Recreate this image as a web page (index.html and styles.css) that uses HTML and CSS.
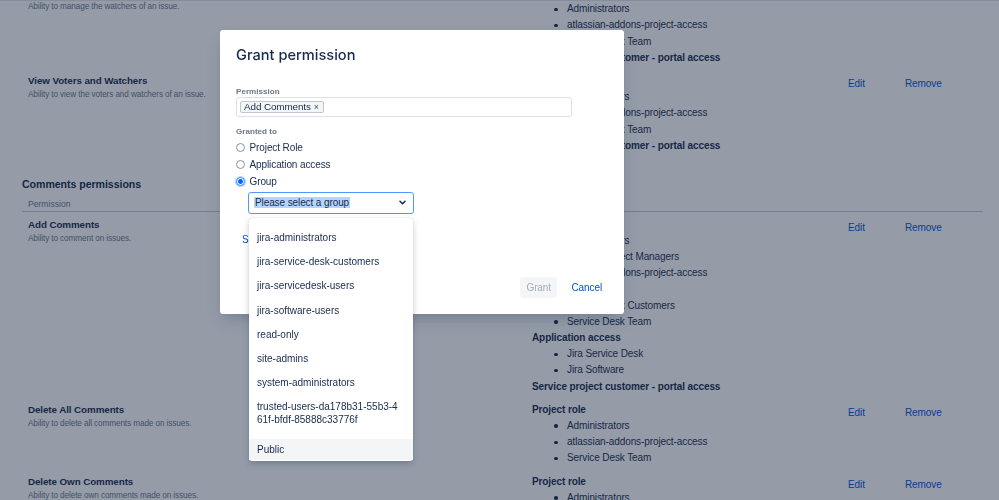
FILE: index.html
```html
<!DOCTYPE html>
<html lang="en">
<head>
<meta charset="utf-8">
<title>Grant permission</title>
<link rel="stylesheet" href="styles.css">
</head>
<body>
<div class="page">
  <section class="perm-section">
    <div class="perm-table">
      <div class="perm-row">
        <div class="perm-cell">
          <div class="perm-title">Manage Watchers</div>
          <div class="perm-desc">Ability to manage the watchers of an issue.</div>
        </div>
        <div class="grants">
          <div class="grant-type">Project role</div>
          <ul class="grant-list"><li>Administrators</li><li>atlassian-addons-project-access</li><li>Service Desk Team</li></ul>
          <div class="grant-type">Service project customer - portal access</div>
        </div>
        <a class="action" href="#">Edit</a>
        <a class="action" href="#">Remove</a>
      </div>
      <div class="perm-row">
        <div class="perm-cell">
          <div class="perm-title">View Voters and Watchers</div>
          <div class="perm-desc">Ability to view the voters and watchers of an issue.</div>
        </div>
        <div class="grants">
          <div class="grant-type">Project role</div>
          <ul class="grant-list"><li>Administrators</li><li>atlassian-addons-project-access</li><li>Service Desk Team</li></ul>
          <div class="grant-type">Service project customer - portal access</div>
        </div>
        <a class="action" href="#">Edit</a>
        <a class="action" href="#">Remove</a>
      </div>
    </div>
  </section>

  <section class="perm-section">
    <h3 class="section-heading">Comments permissions</h3>
    <div class="table-head">Permission</div>
    <div class="perm-table">
      <div class="perm-row">
        <div class="perm-cell">
          <div class="perm-title">Add Comments</div>
          <div class="perm-desc">Ability to comment on issues.</div>
        </div>
        <div class="grants">
          <div class="grant-type">Project role</div>
          <ul class="grant-list"><li>Administrators</li><li>Service Project Managers</li><li>atlassian-addons-project-access</li><li>Developers</li><li>Service Desk Customers</li><li>Service Desk Team</li></ul>
          <div class="grant-type">Application access</div>
          <ul class="grant-list"><li>Jira Service Desk</li><li>Jira Software</li></ul>
          <div class="grant-type">Service project customer - portal access</div>
        </div>
        <a class="action" href="#">Edit</a>
        <a class="action" href="#">Remove</a>
      </div>
      <div class="perm-row">
        <div class="perm-cell">
          <div class="perm-title">Delete All Comments</div>
          <div class="perm-desc">Ability to delete all comments made on issues.</div>
        </div>
        <div class="grants">
          <div class="grant-type">Project role</div>
          <ul class="grant-list"><li>Administrators</li><li>atlassian-addons-project-access</li><li>Service Desk Team</li></ul>
        </div>
        <a class="action" href="#">Edit</a>
        <a class="action" href="#">Remove</a>
      </div>
      <div class="perm-row">
        <div class="perm-cell">
          <div class="perm-title">Delete Own Comments</div>
          <div class="perm-desc">Ability to delete own comments made on issues.</div>
        </div>
        <div class="grants">
          <div class="grant-type">Project role</div>
          <ul class="grant-list"><li>Administrators</li><li>atlassian-addons-project-access</li><li>Service Desk Team</li></ul>
        </div>
        <a class="action" href="#">Edit</a>
        <a class="action" href="#">Remove</a>
      </div>
    </div>
  </section>
</div>

<div class="blanket"></div>

<div class="dialog" role="dialog">
  <h2 class="dialog-title">Grant permission</h2>
  <div class="field-label">Permission</div>
  <div class="multi-select"><span class="tag">Add Comments<span class="tag-x">×</span></span></div>
  <div class="field-label granted">Granted to</div>
  <div class="radio-group">
    <div class="radio"><span class="radio-circle"></span>Project Role</div>
    <div class="radio"><span class="radio-circle"></span>Application access</div>
    <div class="radio"><span class="radio-circle checked"></span>Group</div>
  </div>
  <div class="select-wrap">
    <div class="select">
      <span class="select-text">Please select a group</span>
      <svg class="chevron" width="7" height="5" viewBox="0 0 7 5"><path d="M1 1.2 L3.5 3.7 L6 1.2" fill="none" stroke="#172b4d" stroke-width="1.5" stroke-linecap="round" stroke-linejoin="round"/></svg>
    </div>
    <div class="dropdown">
      <div class="dd-group">
        <div class="dd-item">jira-administrators</div>
        <div class="dd-item">jira-service-desk-customers</div>
        <div class="dd-item">jira-servicedesk-users</div>
        <div class="dd-item">jira-software-users</div>
        <div class="dd-item">read-only</div>
        <div class="dd-item">site-admins</div>
        <div class="dd-item">system-administrators</div>
        <div class="dd-item">trusted-users-da178b31-55b3-4<br>61f-bfdf-85888c33776f</div>
      </div>
      <div class="dd-item dd-active">Public</div>
    </div>
  </div>
  <a class="show-link" href="#">Show advanced</a>
  <div class="dialog-footer">
    <button class="btn btn-disabled" type="button">Grant</button>
    <button class="btn btn-link" type="button">Cancel</button>
  </div>
</div>
</body>
</html>
```

FILE: styles.css
```css
* { box-sizing: border-box; }

body {
  margin: 0;
  width: 999px;
  height: 500px;
  overflow: hidden;
  font-family: "Liberation Sans", Arial, sans-serif;
  color: #172b4d;
  background: #ffffff;
}

.page {
  margin-top: -20px;
  padding-left: 22px;
  width: 983px;
}

.perm-table { width: 961px; }

.perm-row {
  display: grid;
  grid-template-columns: 504px 316px 57px 1fr;
  padding: 5px 0 2px 6px;
  align-items: start;
}

.perm-title {
  font-weight: bold;
  font-size: 9.8px;
  letter-spacing: -0.08px;
  line-height: 16px;
}

.perm-desc {
  font-size: 8.2px;
  letter-spacing: -0.1px;
  line-height: 12px;
  color: #6b778c;
}

.grants {
  font-size: 10px;
  letter-spacing: -0.1px;
  line-height: 16.2px;
}

.grant-type { font-weight: bold; }

.grant-list {
  list-style: none;
  margin: 0;
  padding: 0 0 0 22px;
}

.grant-list li {
  display: flex;
  align-items: center;
}

.grant-list li::before {
  content: "";
  flex: none;
  width: 3.5px;
  height: 3.5px;
  border-radius: 50%;
  background: currentColor;
  margin-right: 9.5px;
}

.action {
  font-size: 10px;
  letter-spacing: -0.1px;
  line-height: 16px;
  padding-top: 3px;
  color: #0052cc;
  text-decoration: none;
}

.section-heading {
  margin: 19.5px 0 0;
  font-size: 10.6px;
  letter-spacing: -0.05px;
  line-height: 16px;
  font-weight: bold;
}

.table-head {
  width: 961px;
  margin-top: 6px;
  padding: 0 0 1px 6px;
  font-size: 8.6px;
  line-height: 12px;
  color: #6b778c;
  border-bottom: 1px solid #c1c7d0;
}

/* overlay */
.blanket {
  position: fixed;
  inset: 0;
  background: rgba(20, 35, 62, 0.45);
  border-top: 1px solid rgba(9, 30, 66, 0.12);
  z-index: 1;
}

.dialog {
  position: fixed;
  left: 220px;
  top: 29.5px;
  width: 404px;
  height: 284.5px;
  padding: 16.5px 16px 16px;
  background: #ffffff;
  border-radius: 3px;
  display: flex;
  flex-direction: column;
  align-items: flex-start;
  z-index: 2;
  box-shadow: 0 8px 16px -4px rgba(9, 30, 66, 0.25);
}

.dialog-title {
  margin: 0;
  font-family: Inter, "Liberation Sans", Arial, sans-serif;
  font-size: 14.6px;
  line-height: 19px;
  font-weight: 500;
  color: #172b4d;
}

.field-label {
  margin-top: 21px;
  font-size: 8.1px;
  line-height: 11px;
  font-weight: bold;
  color: #6b778c;
}

.field-label.granted { margin-top: 8.5px; }

.multi-select {
  width: 336px;
  height: 20px;
  border: 1px solid #dfe1e6;
  border-radius: 3px;
  display: flex;
  align-items: center;
  padding-left: 3px;
}

.tag {
  display: inline-flex;
  align-items: center;
  height: 12.5px;
  padding: 0 3.5px 0 3px;
  font-size: 9.9px;
  letter-spacing: -0.1px;
  line-height: 10px;
  color: #172b4d;
  background: #f4f5f7;
  border: 1px solid #c1c7d0;
  border-radius: 2px;
}

.tag-x {
  margin-left: 3px;
  font-size: 9px;
  color: #42526e;
}

.radio-group {
  margin-top: 2px;
  display: flex;
  flex-direction: column;
}

.radio {
  display: flex;
  align-items: center;
  font-size: 10px;
  letter-spacing: -0.1px;
  line-height: 17px;
  color: #172b4d;
}

.radio-circle {
  flex: none;
  width: 9px;
  height: 9px;
  margin-right: 4.5px;
  border: 1px solid #8993a4;
  border-radius: 50%;
  background: #ffffff;
}

.radio-circle.checked {
  border-color: #2684ff;
  background: radial-gradient(circle, #0065ff 0 2.1px, #ffffff 2.6px);
  box-shadow: 0 0 0 1px #b3d4ff;
}

.select-wrap {
  position: relative;
  margin: 2.4px 0 0 12px;
  width: 166px;
}

.select {
  height: 22px;
  display: flex;
  align-items: center;
  justify-content: space-between;
  padding: 0 7px 0 5px;
  border: 1px solid #4c9aff;
  border-radius: 3px;
  background: #ffffff;
}

.select-text {
  font-size: 10px;
  letter-spacing: -0.1px;
  line-height: 11px;
  background: #b4d5fe;
  color: #172b4d;
  padding: 0 1px;
}

.chevron { display: block; }

.dropdown {
  position: absolute;
  top: 26.5px;
  left: 1px;
  width: 164px;
  background: #ffffff;
  border-radius: 3px;
  box-shadow: 0 3px 6px rgba(9, 30, 66, 0.22), 0 0 1px rgba(9, 30, 66, 0.3);
  padding-bottom: 1px;
  z-index: 3;
}

.dd-group { padding-top: 7.5px; padding-bottom: 7.5px; }

.dd-item {
  padding: 6px 8px;
  font-size: 10px;
  line-height: 12.2px;
  color: #172b4d;
  white-space: nowrap;
}

.dd-active {
  padding-top: 4.4px;
  padding-bottom: 4.4px;
  background: #f4f5f7;
}

.show-link {
  margin: 20px 0 0 6px;
  font-size: 10px;
  line-height: 12px;
  color: #0052cc;
  text-decoration: none;
}

.dialog-footer {
  margin-top: auto;
  align-self: stretch;
  display: flex;
  justify-content: flex-end;
  gap: 8px;
}

.btn {
  height: 21px;
  border: 0;
  border-radius: 3px;
  font-family: "Liberation Sans", Arial, sans-serif;
  font-size: 10px;
  letter-spacing: -0.1px;
  line-height: 21px;
  padding: 0 6.5px;
  background: transparent;
}

.btn-disabled {
  background: #f4f5f7;
  color: #a5adba;
}

.btn-link {
  padding: 0 6px;
  color: #0052cc;
}
```
